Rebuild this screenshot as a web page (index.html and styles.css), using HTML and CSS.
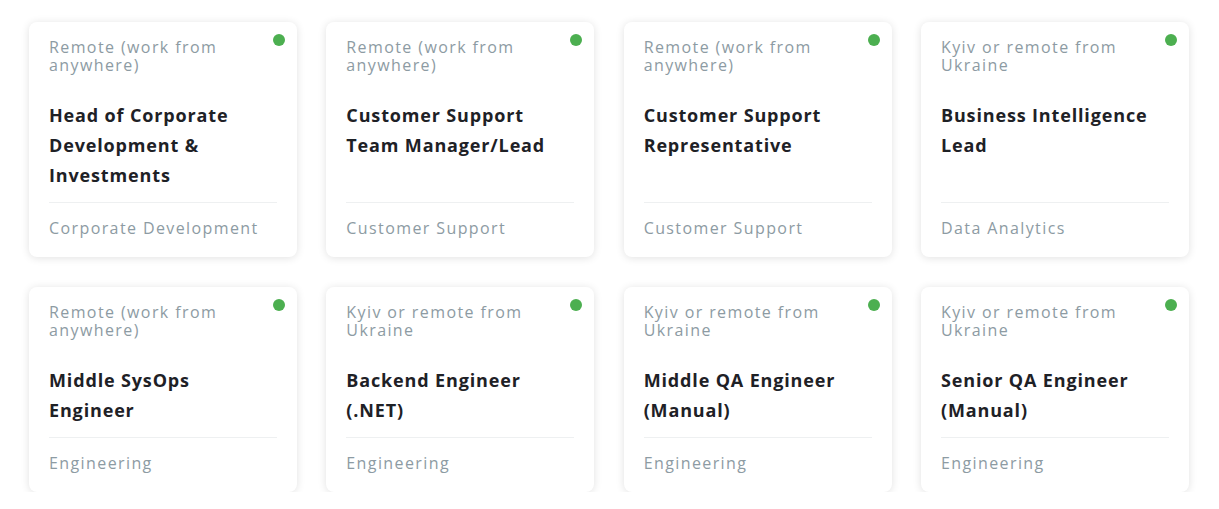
FILE: index.html
```html
<!DOCTYPE html>
<html>
<head>
<meta charset="utf-8">
<link rel="stylesheet" href="styles.css">
</head>
<body>
<div class="grid">
  <div class="card">
    <span class="dot"></span>
    <div class="loc">Remote (work from anywhere)</div>
    <div class="title">Head of Corporate Development &amp; Investments</div>
    <div class="cat">Corporate Development</div>
  </div>
  <div class="card">
    <span class="dot"></span>
    <div class="loc">Remote (work from anywhere)</div>
    <div class="title">Customer Support Team Manager/Lead</div>
    <div class="cat">Customer Support</div>
  </div>
  <div class="card">
    <span class="dot"></span>
    <div class="loc">Remote (work from anywhere)</div>
    <div class="title">Customer Support Representative</div>
    <div class="cat">Customer Support</div>
  </div>
  <div class="card">
    <span class="dot"></span>
    <div class="loc">Kyiv or remote from Ukraine</div>
    <div class="title">Business Intelligence Lead</div>
    <div class="cat">Data Analytics</div>
  </div>
  <div class="card">
    <span class="dot"></span>
    <div class="loc">Remote (work from anywhere)</div>
    <div class="title">Middle SysOps Engineer</div>
    <div class="cat">Engineering</div>
  </div>
  <div class="card">
    <span class="dot"></span>
    <div class="loc">Kyiv or remote from Ukraine</div>
    <div class="title">Backend Engineer (.NET)</div>
    <div class="cat">Engineering</div>
  </div>
  <div class="card">
    <span class="dot"></span>
    <div class="loc">Kyiv or remote from Ukraine</div>
    <div class="title">Middle QA Engineer (Manual)</div>
    <div class="cat">Engineering</div>
  </div>
  <div class="card">
    <span class="dot"></span>
    <div class="loc">Kyiv or remote from Ukraine</div>
    <div class="title">Senior QA Engineer (Manual)</div>
    <div class="cat">Engineering</div>
  </div>
</div>
</body>
</html>
```
FILE: styles.css
```css
html, body {
  margin: 0;
  padding: 0;
  background: #ffffff;
}
body {
  font-family: "Open Sans", "DejaVu Sans", sans-serif;
}
.grid {
  display: grid;
  grid-template-columns: repeat(4, 1fr);
  column-gap: 29.33px;
  row-gap: 30px;
  padding: 22px 30px 0 29px;
}
.card {
  position: relative;
  display: flex;
  flex-direction: column;
  background: #fff;
  border-radius: 8px;
  box-shadow: 0 1px 8px rgba(0, 0, 0, 0.12);
  padding: 16px 20px 20px 20px;
}
.dot {
  position: absolute;
  top: 12px;
  right: 12px;
  width: 12px;
  height: 12px;
  border-radius: 50%;
  background: #4caf50;
}
.loc {
  font-size: 16px;
  line-height: 18px;
  color: #8d9ba3;
  padding-right: 20px;
  letter-spacing: 1.4px;
}
.title {
  margin-top: 26px;
  margin-bottom: 12px;
  font-size: 18px;
  line-height: 30px;
  font-weight: 700;
  color: #1e2126;
  letter-spacing: 0.85px;
}
.cat {
  margin-top: auto;
  padding-top: 16px;
  border-top: 1px solid #eef0f1;
  font-size: 16px;
  line-height: 18px;
  color: #8d9ba3;
  letter-spacing: 1.4px;
}
```
